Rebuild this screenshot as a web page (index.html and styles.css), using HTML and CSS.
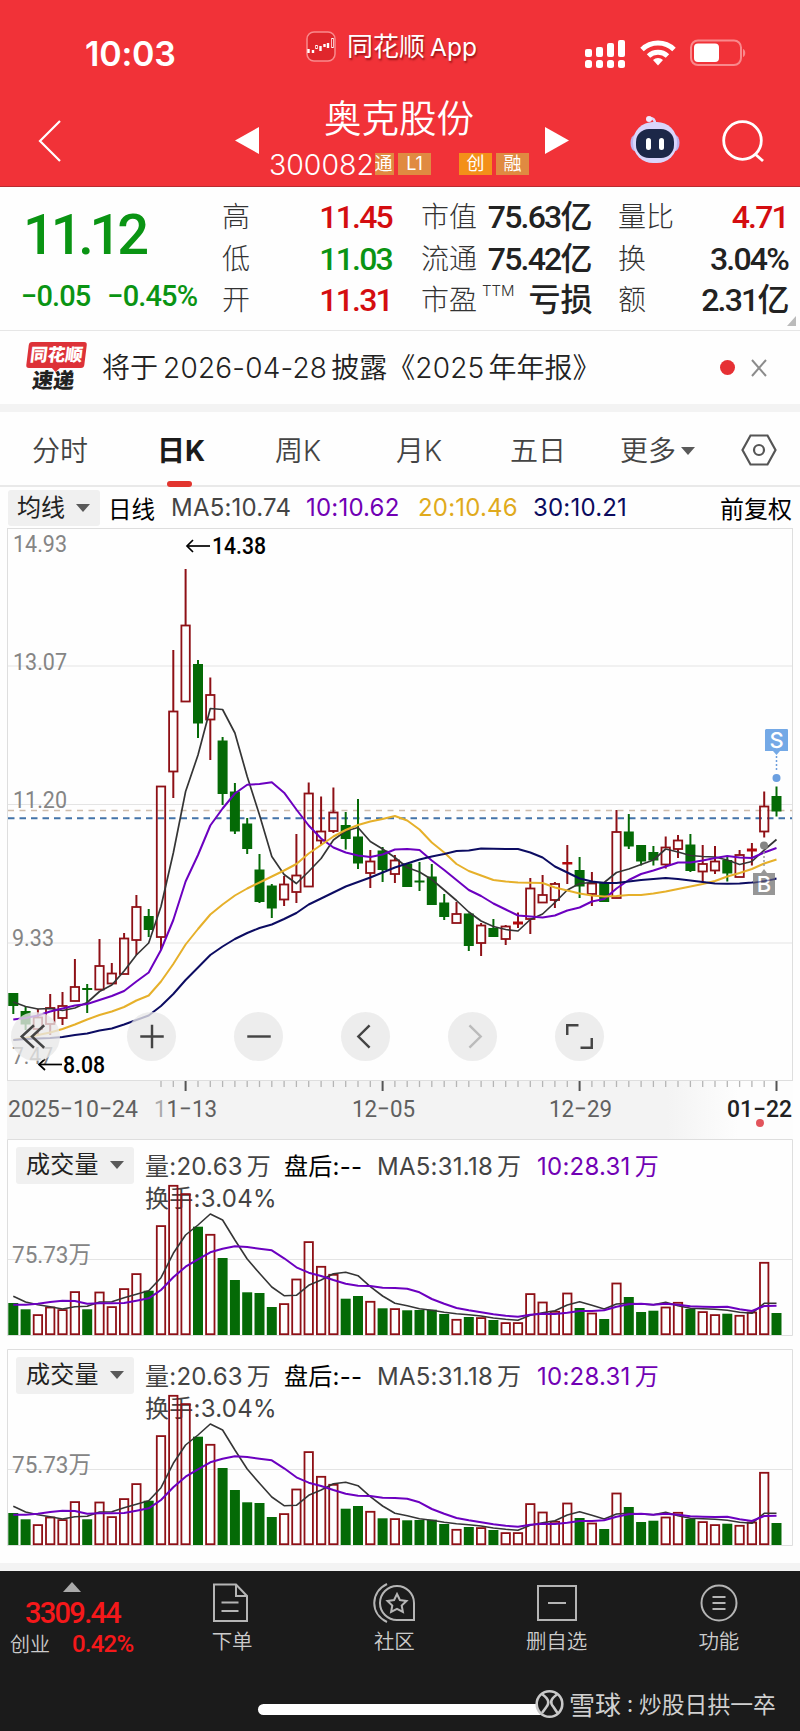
FILE: index.html
```html
<!DOCTYPE html>
<html lang="zh-CN">
<head>
  <meta charset="UTF-8">
  <meta name="viewport" content="width=device-width, initial-scale=1.0">
  <title>奥克股份 300082</title>
  <link rel="stylesheet" href="styles.css">
</head>
<body>
  <header class="header">
    <div class="status">
      <div class="time">10:03</div>
      <div class="app">
        <svg width="30" height="31" viewBox="0 0 30 31">
          <rect x="1" y="1" width="28" height="29" rx="7" fill="#e0262c" stroke="#f98a8c" stroke-width="1.500"/>
          <path d="M2.500 18v4M7 19v3M10.500 14v4M14.500 15v5M18.500 13v3M22 12v5M26.500 7v10" stroke="#fff" stroke-width="2.400" fill="none"/>
          <path d="M10.500 15v2M26.500 8v8" stroke="#e0262c" stroke-width="1"/>
        </svg>
        <span>同花顺<i>App</i></span>
      </div>
      <div class="signals">
        <svg width="41" height="30" viewBox="0 0 41 30" fill="#fff">
          <rect x="0" y="10" width="7" height="8" rx="2"/><rect x="11" y="8" width="7" height="10" rx="2"/>
          <rect x="22" y="4" width="7" height="14" rx="2"/><rect x="33" y="1" width="7" height="17" rx="2"/>
          <rect x="0" y="21" width="7" height="8" rx="2.500"/><rect x="11" y="21" width="7" height="8" rx="2.500"/>
          <rect x="22" y="21" width="7" height="8" rx="2.500"/><rect x="33" y="21" width="7" height="8" rx="2.500"/>
        </svg>
        <svg width="36" height="28" viewBox="0 0 36 28" fill="none" stroke="#fff" stroke-width="5">
          <path d="M2 10.500a23 23 0 0 1 32 0"/><path d="M8.500 17a14 14 0 0 1 19 0"/>
          <path d="M18 26.500l-5-5.500a7.500 7.500 0 0 1 10 0z" fill="#fff" stroke="none"/>
        </svg>
        <svg width="57" height="28" viewBox="0 0 57 28">
          <rect x="1" y="1.500" width="50" height="24.500" rx="7" fill="none" stroke="#f9898c" stroke-width="2"/>
          <rect x="4" y="4.500" width="25" height="18.500" rx="4" fill="#fff"/>
          <path d="M53 10c3 1 3 7 0 8z" fill="#f9898c"/>
        </svg>
      </div>
    </div>
    <div class="nav">
      <svg class="back" width="24" height="42" viewBox="0 0 24 42" fill="none" stroke="#fff" stroke-width="2.200"><path d="M22 1L2 21l20 20"/></svg>
      <svg class="prev" width="24" height="27" viewBox="0 0 24 27" fill="#fff"><path d="M24 0v27L0 13.500z"/></svg>
      <div class="stock">
        <h1>奥克股份</h1>
        <div class="code">300082<b class="cut">通</b><b>L1</b><b class="gap">创</b><b>融</b></div>
      </div>
      <svg class="next" width="24" height="27" viewBox="0 0 24 27" fill="#fff"><path d="M0 0v27l24-13.500z"/></svg>
      <svg class="robot" width="50" height="48" viewBox="0 0 50 48">
        <path d="M25 8c0-4-2-6-5-6" fill="none" stroke="#ddd9fb" stroke-width="2.500"/>
        <circle cx="19" cy="3" r="3" fill="#efeaff"/>
        <ellipse cx="5" cy="27" rx="4.500" ry="8" fill="#bdb4ef"/><ellipse cx="45" cy="27" rx="4.500" ry="8" fill="#bdb4ef"/>
        <rect x="3" y="6" width="44" height="41" rx="20" fill="#d9d5fb"/>
        <rect x="6" y="13" width="38" height="29" rx="13" fill="#1c2748"/>
        <rect x="16" y="22" width="5" height="12" rx="2.500" fill="#fff"/><rect x="29" y="22" width="5" height="12" rx="2.500" fill="#fff"/>
      </svg>
      <svg class="search" width="43" height="43" viewBox="0 0 43 43" fill="none" stroke="#fff" stroke-width="2.800"><circle cx="20.500" cy="20.500" r="18.800"/><path d="M33 34l8 7"/></svg>
    </div>
  </header>

  <section class="quote">
    <div class="price">
      <strong>11.12</strong>
      <div><span>−0.05</span><span>−0.45%</span></div>
    </div>
    <dl>
      <dt>高</dt><dd class="red">11.45</dd>
      <dt>低</dt><dd class="green">11.03</dd>
      <dt>开</dt><dd class="red">11.31</dd>
    </dl>
    <dl>
      <dt>市值</dt><dd>75.63<i>亿</i></dd>
      <dt>流通</dt><dd>75.42<i>亿</i></dd>
      <dt>市盈<sup>TTM</sup></dt><dd><i>亏损</i></dd>
    </dl>
    <dl>
      <dt>量比</dt><dd class="red">4.71</dd>
      <dt>换</dt><dd>3.04%</dd>
      <dt>额</dt><dd>2.31<i>亿</i></dd>
    </dl>
  </section>

  <section class="notice">
    <div class="badge"><span>同花顺</span><em>速递</em></div>
    <p>将于<i>2026-04-28</i>披露<i>《2025</i>年年报》</p>
    <span class="dot"></span>
    <svg width="16" height="18" viewBox="0 0 16 18" stroke="#8c8c8c" stroke-width="2"><path d="M1 1l14 16M15 1L1 17"/></svg>
  </section>

  <nav class="tabs">
    <a>分时</a><a class="active">日K</a><a>周K</a><a>月K</a><a>五日</a><a>更多<u class="caret"></u></a>
    <svg width="36" height="32" viewBox="0 0 36 32" fill="none" stroke="#555" stroke-width="2.200"><path d="M9.500 1.500h17L34.500 16l-8 14.500h-17L1.500 16z"/><circle cx="18" cy="16" r="5"/></svg>
  </nav>

  <div class="ma-row">
    <span class="pill">均线<u class="caret"></u></span>
    <span class="kind">日线</span>
    <span class="ma5">MA5:10.74</span>
    <span class="ma10">10:10.62</span>
    <span class="ma20">20:10.46</span>
    <span class="ma30">30:10.21</span>
    <span class="adjust">前复权</span>
  </div>

  <div class="kline">
    <svg id="kline" width="800" height="611" viewBox="0 528 800 611"></svg>
    <div class="controls">
      <button><svg viewBox="0 0 48 48"><path d="M22.500 13L10.500 24l12 11M32.500 13L20.500 24l12 11"/></svg></button>
      <button><svg viewBox="0 0 48 48"><path d="M13 24h23M24.500 12.500v23"/></svg></button>
      <button><svg viewBox="0 0 48 48"><path d="M13 24h23"/></svg></button>
      <button><svg viewBox="0 0 48 48"><path d="M28 13L17 24l11 11"/></svg></button>
      <button class="off"><svg viewBox="0 0 48 48"><path d="M21 13l11 11-11 11"/></svg></button>
      <button><svg viewBox="0 0 48 48"><path d="M12 22.500V13h11M36 25.500V35H25"/></svg></button>
    </div>
  </div>

  <div class="volume">
    <div class="info">
      <span class="pill">成交量<u class="caret"></u></span>
      <span class="vol">量:20.63<i>万</i></span><span class="after">盘后:--</span><span class="ma5">MA5:31.18<i>万</i></span><span class="ma10">10:28.31<i>万</i></span>
      <div class="turnover">换手:3.04%</div>
    </div>
    <svg class="bars" width="800" height="197" viewBox="0 0 800 197"></svg>
  </div>
  <div class="volume">
    <div class="info">
      <span class="pill">成交量<u class="caret"></u></span>
      <span class="vol">量:20.63<i>万</i></span><span class="after">盘后:--</span><span class="ma5">MA5:31.18<i>万</i></span><span class="ma10">10:28.31<i>万</i></span>
      <div class="turnover">换手:3.04%</div>
    </div>
    <svg class="bars" width="800" height="197" viewBox="0 0 800 197"></svg>
  </div>

  <footer class="footer">
    <div class="bar">
      <div class="index">
        <u></u>
        <strong>3309.44</strong>
        <div><span>创业</span><b>0.42%</b></div>
      </div>
      <a>
        <svg class="doc" width="38" height="40" viewBox="0 0 38 40"><path d="M3 1.500h22L36 13v25H3zM25 1.500V13h11M10.500 19.500h17M10.500 28h17"/></svg>
        下单
      </a>
      <a>
        <svg width="44" height="42" viewBox="0 0 44 42"><path d="M15 2C-2 10-2 32 15 40M25 4a17 17 0 1 0 0 34h17V21A17 17 0 0 0 25 4z"/><path d="M25 12l2.900 6 6.600.900-4.800 4.600 1.200 6.500-5.900-3.100-5.900 3.100 1.200-6.500-4.800-4.600 6.600-.9z"/></svg>
        社区
      </a>
      <a>
        <svg width="42" height="40" viewBox="0 0 42 40"><path d="M2 3h38v34H2zM12 20h18"/></svg>
        删自选
      </a>
      <a>
        <svg width="40" height="40" viewBox="0 0 40 40"><circle cx="20" cy="20" r="17.500"/><path d="M13.500 14h13M13.500 20h13M13.500 26h13"/></svg>
        功能
      </a>
    </div>
    <div class="home"></div>
    <div class="mark">
      <svg width="29" height="30" viewBox="0 0 29 30" fill="none" stroke="#c9c9c9" stroke-width="2.600"><circle cx="14.500" cy="15" r="12.800" fill="#1b1b1b"/><path d="M7.500 5.500c7 5 7 9 3.500 13l-4 5.500M22 5.500c-7 5-7 8.500-3.500 12.500l4 6"/></svg>
      <b>雪球</b><span>:</span>炒股日拱一卒
    </div>
  </footer>
  <script src="chart.js"></script>
</body>
</html>
```
FILE: styles.css
```css
* {
  box-sizing: border-box;
}
body {
  margin: 0;
  width: 800px;
  background: #fefefe;
  font-family: Inter, "Noto Sans CJK SC", sans-serif;
  color: #222;
}
i, em {
  font-style: normal;
}
u {
  text-decoration: none;
}
svg {
  display: block;
  flex: none;
}

/* header */
.header {
  height: 187px;
  background: #f13238;
  border-bottom: 1px solid #b92b30;
  color: #fff;
}
.status {
  display: flex;
  height: 100px;
}
.time {
  width: 221px;
  padding: 33px 0 0 85px;
  font-size: 34px;
  font-weight: 600;
  line-height: 42px;
  letter-spacing: -.2px;
}
.app {
  display: flex;
  width: 364px;
  padding: 31px 0 0 85px;
}
.app span {
  margin-left: 11px;
  font-size: 26px;
  line-height: 32px;
  text-shadow: 1px 2px 2px rgba(90, 0, 0, .6);
}
.app i {
  margin-left: 5px;
  font-size: 24.5px;
}
.signals {
  display: flex;
  align-items: flex-start;
  gap: 14px;
  padding-top: 39px;
}
.nav {
  display: grid;
  grid-template-columns: 38px 197px 34px 276px 85px 92px 1fr;
  height: 86px;
}
.back {
  grid-column: 2;
  margin-top: 20px;
}
.prev, .next {
  margin-top: 27px;
}
.robot {
  margin-top: 16px;
}
.search {
  margin-top: 20px;
}
.stock h1 {
  margin: -1px 0 0 55px;
  font-size: 37.5px;
  font-weight: 350;
  line-height: 40px;
}
.code {
  display: flex;
  align-items: center;
  height: 26px;
  margin-top: 12px;
  font-size: 28.5px;
  font-weight: 350;
}
.code b {
  width: 33px;
  height: 22px;
  margin-left: 4px;
  background: #e08a41;
  font-size: 18px;
  font-weight: 400;
  line-height: 21px;
  text-align: center;
}
.code .cut {
  width: 19px;
  margin-left: 1px;
  overflow: hidden;
  text-indent: -2px;
}
.code .gap {
  margin-left: 28px;
  background: #f39019;
}

/* quote */
.quote {
  position: relative;
  display: grid;
  grid-template-columns: 222px 199px 197px 170px;
  height: 144px;
  border-bottom: 1px solid #e6e6e6;
  font-family: Roboto, "Noto Sans CJK SC", sans-serif;
}
.quote::after {
  content: "";
  position: absolute;
  right: 4px;
  bottom: 4px;
  border: solid transparent;
  border-width: 10px 0 0 9px;
  border-bottom: 10px solid #bbb;
  border-top: 0;
}
.price {
  padding: 16px 0 0 23px;
  color: #0a9413;
}
.price strong {
  display: block;
  font-size: 56px;
  font-weight: 500;
  line-height: 64px;
  letter-spacing: -4.2px;
}
.price div {
  display: flex;
  gap: 17px;
  margin-top: 11px;
  margin-left: -2px;
  font-size: 29px;
  font-weight: 500;
  line-height: 36px;
  letter-spacing: -.9px;
}
.quote dl {
  display: grid;
  grid-template-columns: auto 1fr;
  grid-template-rows: repeat(3, 41.5px);
  margin: 10px 0 0;
}
.quote dl:nth-of-type(1) {
  padding-right: 29px;
}
.quote dl:nth-of-type(2) {
  padding-right: 27px;
}
.quote dt {
  font-size: 28px;
  font-weight: 300;
  color: #333;
  line-height: 42px;
  white-space: nowrap;
}
.quote dd {
  margin: 0;
  font-size: 32px;
  font-weight: 500;
  line-height: 41px;
  letter-spacing: -1.8px;
  text-align: right;
  white-space: nowrap;
}
.quote dd i {
  margin-right: -1.5px;
  letter-spacing: 0;
}
.quote sup {
  display: inline-block;
  width: 0;
  margin-left: 5px;
  font: 300 15px/10px Inter;
  vertical-align: 14px;
}
.quote .red {
  color: #d40d10;
}
.quote .green {
  color: #0a9413;
}

/* notice */
.notice {
  display: flex;
  align-items: center;
  height: 81px;
  padding-left: 26px;
  border-bottom: 8px solid #f3f3f3;
}
.badge {
  position: relative;
  width: 58px;
  margin-right: 18px;
  text-align: center;
  font-size: 17.5px;
  font-weight: 900;
  line-height: 25px;
  transform: skewX(-7deg);
}
.badge span {
  display: block;
  height: 26px;
  border-radius: 3px;
  background: #dd3238;
  color: #fff;
}
.badge span::after {
  content: "";
  position: absolute;
  left: 26px;
  top: 26px;
  border: 4px solid transparent;
  border-top-color: #dd3238;
}
.badge em {
  display: block;
  font-size: 21px;
  line-height: 25px;
}
.notice p {
  width: 618px;
  margin: 0;
  font-size: 28px;
  font-weight: 350;
  line-height: 40px;
  white-space: nowrap;
}
.notice p i {
  margin: 0 4px 0 5px;
  letter-spacing: .2px;
}
.notice p i + i {
  margin-left: 0;
}
.dot {
  width: 15px;
  height: 15px;
  margin-right: 16px;
  border-radius: 50%;
  background: #e63034;
}

/* tabs */
.tabs {
  display: grid;
  grid-template-columns: 125px 118px 121px 114px 110px 120px 1fr;
  align-items: center;
  height: 75px;
  padding-left: 32px;
  border-bottom: 2px solid #e9e9e9;
  font-size: 28px;
  font-weight: 350;
  color: #444;
}
.tabs a {
  position: relative;
  height: 75px;
  line-height: 78px;
}
.tabs svg {
  margin-left: 1px;
}
.tabs .active {
  font-weight: 700;
  color: #1b1b1b;
}
.tabs .active::after {
  content: "";
  position: absolute;
  left: 10px;
  bottom: 0;
  width: 25px;
  height: 6px;
  border-radius: 3px;
  background: #e2352f;
}
.caret {
  display: inline-block;
  margin-left: 11px;
  border: 7px solid transparent;
  border-top: 8px solid #5a5a5a;
  border-bottom: 0;
  vertical-align: 4px;
}
.tabs .caret {
  margin-left: 5px;
  vertical-align: 6px;
}

/* average line row */
.ma-row {
  display: flex;
  align-items: center;
  height: 41px;
  padding: 0 8px;
  font-size: 24px;
  white-space: nowrap;
}
.pill {
  background: #f0f0f0;
  border-radius: 3px;
  height: 36px;
  line-height: 36px;
}
.ma-row .pill {
  width: 92px;
  padding-left: 9px;
}
.kind {
  width: 63px;
  margin-left: 8px;
  color: #000;
  font-size: 23.5px;
}
.ma-row .ma5, .ma-row .ma10, .ma-row .ma20, .ma-row .ma30 {
  letter-spacing: .2px;
}
.ma-row .ma5 {
  width: 135px;
}
.ma-row .ma10 {
  width: 112px;
}
.ma-row .ma20 {
  width: 115px;
  color: #e0aa1c;
}
.ma5 {
  color: #444;
}
.ma10 {
  color: #7100b4;
}
.ma30 {
  color: #0b0b5e;
}
.adjust {
  margin-left: auto;
  color: #000;
}

/* charts */
.kline {
  position: relative;
  height: 611px;
}
.controls {
  position: absolute;
  left: 11px;
  top: 484px;
  display: flex;
  gap: 58px;
}
.controls button {
  width: 49px;
  height: 49px;
  padding: 0;
  border: 0;
  border-radius: 50%;
  background: rgba(232, 232, 232, .78);
}
.controls button:first-child {
  margin-right: 9px;
}
.controls svg {
  fill: none;
  stroke: #444;
  stroke-width: 2.4;
}
.controls .off svg {
  stroke: #bbb;
}
.label {
  font: 400 24px Roboto, "Noto Sans CJK SC", sans-serif;
  fill: #858585;
}
.label.peak {
  font-weight: 500;
  fill: #000;
}
.label.date {
  fill: #606060;
}
.label.today {
  font-weight: 500;
  fill: #222;
}
.faded {
  fill: #aaa;
}
.flag {
  font: 500 22px Inter, sans-serif;
  fill: #fff;
}
.volume {
  display: grid;
  height: 197px;
  margin-bottom: 12.5px;
}
.info, .bars {
  grid-area: 1 / 1;
}
.info {
  display: grid;
  grid-template-columns: 129px 139px 93px 160px 1fr;
  grid-template-rows: 37px 25px;
  align-content: start;
  align-items: center;
  padding: 8px 0 0 16px;
  font-size: 24px;
  letter-spacing: .25px;
  color: #444;
  white-space: nowrap;
}
.info span:not(.pill) {
  padding-bottom: 2px;
}
.info .pill {
  width: 118px;
  height: 37px;
  padding-left: 10px;
  color: #222;
}
.info i {
  margin-left: 4px;
}
.info .after {
  color: #000;
}
.info .ma10 {
  color: #7100b4;
}
.turnover {
  grid-column: 2;
}

/* footer */
.footer {
  position: relative;
  height: 168.5px;
  margin-top: 17px;
  border-top: 8px solid #f3f3f3;
  background: #1b1b1b;
}
.bar {
  display: flex;
  padding-top: 9px;
  color: #ccc;
}
.bar a {
  display: flex;
  flex: 1;
  flex-direction: column;
  align-items: center;
  gap: 3px;
  padding-top: 2px;
  font-size: 20.5px;
  font-weight: 350;
  line-height: 30px;
}
.bar svg {
  height: 42px;
  fill: none;
  stroke: #b5b5b5;
  stroke-width: 2;
}
.bar .doc {
  margin-right: 5px;
}
.index {
  width: 151px;
  color: #f5181a;
  font-family: Roboto, "Noto Sans CJK SC", sans-serif;
}
.index u {
  display: block;
  width: 18px;
  margin-left: 63px;
  margin-top: 2px;
  border: 9px solid transparent;
  border-top: 0;
  border-bottom: 10px solid #aaa;
}
.index strong {
  display: block;
  margin: 3px 0 0 25px;
  font-size: 29px;
  font-weight: 500;
  line-height: 36px;
  letter-spacing: -1.7px;
}
.index div {
  display: flex;
  gap: 22px;
  margin-left: 10px;
  font-size: 20px;
  line-height: 26px;
  align-items: baseline;
}
.index span {
  color: #ccc;
  font-weight: 350;
}
.index b {
  font-size: 24px;
  font-weight: 500;
  letter-spacing: -.8px;
}
.home {
  position: absolute;
  left: 258px;
  top: 133px;
  width: 287px;
  height: 11px;
  border-radius: 6px;
  background: #fff;
}
.mark {
  position: absolute;
  left: 535px;
  top: 117px;
  display: flex;
  align-items: center;
  height: 32px;
  color: #d0d0d0;
  font-size: 22.8px;
  white-space: nowrap;
}
.mark b {
  margin-left: 5px;
  font-size: 26px;
  font-weight: 400;
}
.mark span {
  width: 18px;
  text-align: center;
}
```
FILE: chart.js
```js
// candle: [up, body top, body bottom, high, low]
const candles = [
  [0,993,1006,993,1014],[0,1011,1024.5,1006,1030],[1,1017.5,1029,1009,1035],[1,1008,1024,994,1035],
  [1,1006,1018,992,1025],[1,987,1001,959,1001],[0,988,990,984,1013],[1,966,989.5,939,989],
  [1,973.5,983.5,963,983],[1,938.5,974,933,974],[1,907,940,895,955],[0,916,930,909,937],
  [1,786.5,937,787,950],[1,711.5,771.5,650,798],[1,625.5,701.5,569,701],[0,664,723.5,660,738],
  [1,695,719.5,677.5,760],[0,740.5,794,737,805],[0,791.5,831.5,783,834],[0,823.5,849,818,854],
  [0,869.5,902,854,903],[0,885.5,908.5,884,918],[1,884.5,899.5,876,906],[1,875.5,892,834,903],
  [1,793.5,886.5,782.5,886],[1,831.5,840.5,796.5,844.5],[1,812.5,831,787.5,833],[0,825,839,812,849.5],
  [0,836.5,863.5,799,869],[1,861.5,873,850,888],[0,850.5,870,847,882],[1,860.5,874,855,883],
  [0,863.5,887,863.5,887],[0,880.5,882.5,862,891],[0,876.5,905,864,905],[0,902.5,917,894,920],
  [1,914,923,902,923],[0,913.5,946,913.5,951],[1,925.5,943,923,956],[0,928,937,919,937],
  [1,926.5,939,925,945],[1,921.5,924.5,912.5,928],[1,888.5,919,878,934],[1,895,902.5,875,902],
  [1,884,900,882,908],[1,862,864.5,845,884],[0,870,886.5,857,898],[1,883.5,894,872,906],
  [0,882.5,902,882.5,902],[1,832,898,810,898],[0,831.5,846.5,814,849],[0,845,861.5,845,865.5],
  [0,852,860.5,846,865.5],[1,847.5,864.5,836.5,868.5],[1,840.5,849,835,858],[0,844.5,871,834,872],
  [1,864,871.5,845,882.5],[1,861.5,870.5,846,874],[0,860,873.5,857,881.5],[1,855,877,850,877],
  [1,848.5,851.5,843,865.5],[1,806.5,831.5,791.5,837.5],[0,796,811.5,786.5,816.5]
];
const lines = [
  ['#353535', 1.7, [1002,1006.5,1009,1008.5,1010.5,1008,1002.5,991.5,985,971,955,943,906.5,853,791.5,755,708.5,709.5,733,776.5,815,856.5,874.5,883.5,871.5,858.5,840,831,827.5,841.5,849,857.5,867.5,872,879.5,890,900.5,912,921,926.5,929.5,931,919.5,914,902.5,890,883.5,882.5,882.5,872.5,869,864.5,860,849,852,855.5,856.5,857,860,864.5,861.5,850,839.5]],
  ['#6c00c0', 2, [1019.5,1018,1015.5,1011.5,1008.5,1005.5,1004,1000,996,991,981.5,972.5,950,920,881.5,855,825.5,808.5,793.5,784.7,784,782.3,792.7,809.5,825.5,838.5,847.5,852.5,855.5,857,854.5,849.5,849,850,860.5,870,880,890,896,903.5,909.5,915.5,916.5,917.5,915.5,910.5,907.5,901.5,899,888.5,880,874,870.5,866.5,862.5,862.5,860.5,858,856,857.5,858,852.5,848]],
  ['#e6b02a', 2, [1040,1038,1035,1032.5,1029,1024.5,1019.5,1015,1011.5,1007,1000.5,995.5,981.5,964,944.5,929,914.5,904.5,895.5,888.5,882.5,876.5,870.5,864,853.5,845,836.5,830,825,821.5,819,816,820.5,829.5,842.5,852.5,864,871,875.5,880,881.5,882.5,882.7,883,887.5,890.5,893.5,895.5,896.5,896,895,895,893.5,891.5,889,886.5,884,881,876.5,873,869,863.5,859.5]],
  ['#0c0c62', 2, [1040,1039,1038.5,1038,1037,1035,1033.5,1030.5,1028.5,1024.5,1020,1015.5,1006,994,980,967.5,955,946.5,939,933,928,924.5,919,913,904.5,898.5,892.5,886.5,882,877.5,872.5,867.5,863.5,859.5,856.5,854,851,850.5,848.5,848.7,849,849,852.5,857.5,866.5,872.5,878.5,881.5,883,883,881.5,880,879,878,879,880.5,882,883.5,883.7,883.5,882.5,881,878.5]]
];
const volumes = [32,25.7,20.7,28.3,25.7,43.7,25.7,43.3,28.7,46.7,61.7,44.3,109.7,150,141.7,108.3,101,77,55,42.7,42,28,31.7,56.3,93.7,69,61,36.3,39,34,26.7,26.7,24.7,25,25.3,21,16,18,17.7,15,12.7,12.7,41.7,33.3,24,42.3,27,22.3,16,52.3,38,23,24.3,28.3,33,26,23.7,20.7,21.3,20,23.3,73,22];
// volume averages, in thirds of a pixel from the top of the panel
const vol5 = [499,516,524,530,537,530,529,516,515,503,493,482,443,370,315,285,252,270,330,387,430,471,497,496,466,450,431,427,437,470,498,520,527,536,541,547,551,554,558,564,568,571,556,548,542,525,515,526,537,522,520,522,524,517,527,535,536,538,541,547,550,520,520];
const vol10 = [524,524,521,516,512,513,521,520,520,519,512,505,480,442,410,388,367,356,349,351,356,361,385,412,428,438,450,461,467,468,473,474,476,487,507,521,534,541,547,553,557,560,554,551,552,548,543,543,541,530,523,521,524,521,524,529,530,531,530,538,543,528,527];

const UP = '#8e1016', DOWN = '#046a06';
const px = i => +(13.3 + 12.31 * i).toFixed(1);
const line = (x1, y1, x2, y2, color, extra = '') =>
  `<path d="M${x1} ${y1}L${x2} ${y2}" stroke="${color}" fill="none" ${extra}/>`;
const curve = (ys, color, width) =>
  `<polyline points="${ys.map((y, i) => px(i) + ',' + y).join(' ')}" fill="none" stroke="${color}" stroke-width="${width}" stroke-linejoin="round"/>`;
const text = (x, y, w, str, cls = '') =>
  `<text class="label ${cls}" x="${x}" y="${y}" textLength="${w}" lengthAdjust="spacingAndGlyphs">${str}</text>`;

function drawKline() {
  let s = '<defs><linearGradient id="fade"><stop offset=".84" stop-color="#f3f3f3"/><stop offset=".93" stop-color="#fdfdfd"/></linearGradient></defs>';
  s += '<rect x="7" y="1081" width="786" height="58" fill="url(#fade)"/>';
  s += '<rect x="7.500" y="528.500" width="785" height="552" fill="#fefefe" stroke="#dedede"/>';
  [666, 804.5, 943].forEach(y => s += line(8, y, 792, y, '#e4e4e4'));
  s += line(8, 810.5, 792, 810.5, '#cdbdad', 'stroke-width="1.300" stroke-dasharray="6 5.500"');
  s += line(8, 818.3, 792, 818.3, '#4273a9', 'stroke-width="2" stroke-dasharray="6.500 5"');
  s += text(13, 552, 54, '14.93') + text(13, 670, 54, '13.07') + text(13, 808, 54, '11.20') + text(12, 946, 42, '9.33') + text(12, 1064, 41, '7.47');

  candles.forEach(([up, top, bottom, high, low], i) => {
    const x = px(i), c = up ? UP : DOWN;
    if (up && bottom - top > 4) {
      s += line(x, high, x, top, c, 'stroke-width="2"') + line(x, bottom, x, low, c, 'stroke-width="2"');
      s += `<rect x="${x - 4.2}" y="${top}" width="8.400" height="${bottom - top}" fill="none" stroke="${c}" stroke-width="1.800"/>`;
    } else {
      s += line(x, high, x, low, c, 'stroke-width="2"');
      s += `<rect x="${x - 5}" y="${top}" width="10" height="${bottom - top}" fill="${up ? '#b3090d' : c}"/>`;
    }
  });
  lines.forEach(([color, width, ys]) => s += curve(ys, color, width));

  // high and low marks
  s += line(187, 546, 210, 546, '#000', 'stroke-width="1.700"') + '<path d="M193 540l-6 6 6 6" fill="none" stroke="#000" stroke-width="1.700"/>' + text(212, 554, 54, '14.38', 'peak');
  s += line(39, 1064.5, 62, 1064.5, '#000', 'stroke-width="1.700"') + '<path d="M45 1059l-6 5.500 6 5.500" fill="none" stroke="#000" stroke-width="1.700"/>' + text(63, 1073, 42, '8.08', 'peak');

  // sell and buy flags
  s += '<path d="M766 729h21a1 1 0 0 1 1 1v21h-8l-3.500 4-3.500-4h-8v-21z" fill="#74a9e6"/><text class="flag" x="776.500" y="748" text-anchor="middle">S</text>';
  s += line(776.5, 756, 776.5, 771, '#6b9ddc', 'stroke-width="1.500" stroke-dasharray="2 2"') + '<circle cx="776.500" cy="778" r="4" fill="#6b9fe0"/>';
  s += '<circle cx="764" cy="845.500" r="4" fill="#858585"/>' + line(764, 852, 764, 868, '#999', 'stroke-width="1.500" stroke-dasharray="2 2"');
  s += '<path d="M753 873h8l3-4 3 4h8v22h-22z" fill="#8b8b8b" opacity=".9"/><text class="flag" x="764" y="892" text-anchor="middle">B</text>';
  s += line(753, 883, 776, 879, '#0c0c62', 'stroke-width="1.500" opacity=".5"');

  // time axis
  for (let i = 12; i < 63; i++) {
    const major = i === 14 || i === 30 || i === 46 || i === 62;
    s += line(px(i), 1081, px(i), major ? 1091 : 1087, major ? '#555' : '#b5b5b5', major ? 'stroke-width="2"' : 'stroke-width="1.300"');
  }
  s += text(8, 1117, 130, '2025−10−24', 'date') + text(154, 1117, 63, '<tspan class="faded">1</tspan>1−13', 'date') + text(352, 1117, 63, '12−05', 'date') + text(549, 1117, 63, '12−29', 'date') + text(727, 1117, 65, '01−22', 'today');
  s += '<circle cx="760" cy="1123" r="4" fill="#e2545c"/>';
  document.getElementById('kline').innerHTML = s;
}

function drawVolume(svg) {
  const base = 196;
  let s = '<path d="M7.500 196.500V.500H792.500V196.500z" fill="none" stroke="#dedede"/>' + line(8, 120.5, 792, 120.5, '#e4e4e4');
  s += text(12, 124, 79, '75.73万');
  volumes.forEach((h, i) => {
    const x = px(i);
    s += candles[i][0]
      ? `<rect x="${x - 4.2}" y="${base - h + .8}" width="8.400" height="${h - 1.6}" fill="none" stroke="${UP}" stroke-width="1.800"/>`
      : `<rect x="${x - 5}" y="${base - h}" width="10" height="${h}" fill="${DOWN}"/>`;
  });
  s += curve(vol5.map(v => +(v / 3 - 9).toFixed(1)), '#353535', 1.6) + curve(vol10.map(v => +(v / 3 - 9).toFixed(1)), '#6c00c0', 2);
  svg.innerHTML = s;
}

drawKline();
document.querySelectorAll('.bars').forEach(drawVolume);
```
